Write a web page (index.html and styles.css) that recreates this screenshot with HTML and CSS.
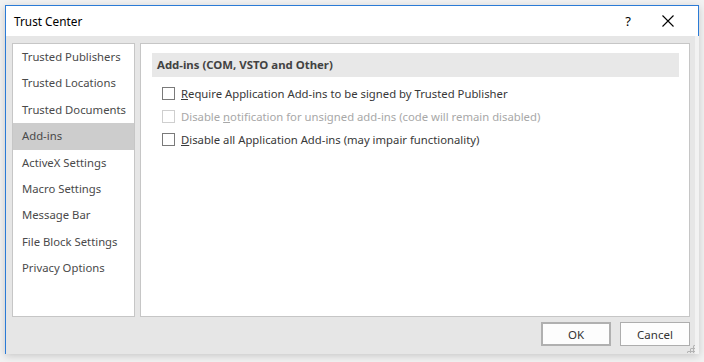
FILE: index.html
```html
<!DOCTYPE html>
<html>
<head>
<meta charset="utf-8">
<link rel="stylesheet" href="styles.css">
</head>
<body>
<div class="backdrop">
  <div class="dialog">
    <div class="titlebar">
      <span class="title">Trust Center</span>
      <span class="help">?</span>
      <span class="close">
        <svg width="12" height="12" viewBox="0 0 12 12"><path d="M0.5 0.5 L11.5 11.5 M11.5 0.5 L0.5 11.5" stroke="#000" stroke-width="1.1" fill="none"/></svg>
      </span>
    </div>
    <div class="body">
      <div class="panels">
        <ul class="nav">
          <li>Trusted Publishers</li>
          <li>Trusted Locations</li>
          <li>Trusted Documents</li>
          <li class="active">Add-ins</li>
          <li>ActiveX Settings</li>
          <li>Macro Settings</li>
          <li>Message Bar</li>
          <li>File Block Settings</li>
          <li>Privacy Options</li>
        </ul>
        <div class="content">
          <div class="section-head">Add-ins (COM, VSTO and Other)</div>
          <div class="options">
            <label class="opt"><span class="box"></span><span><u>R</u>equire Application Add-ins to be signed by Trusted Publisher</span></label>
            <label class="opt disabled"><span class="box"></span><span>Disable <u>n</u>otification for unsigned add-ins (code will remain disabled)</span></label>
            <label class="opt"><span class="box"></span><span><u>D</u>isable all Application Add-ins (may impair functionality)</span></label>
          </div>
        </div>
      </div>
      <div class="buttons">
        <button class="btn default">OK</button>
        <button class="btn">Cancel</button>
      </div>
      <span class="grip"></span>
    </div>
  </div>
</div>
</body>
</html>
```
FILE: styles.css
```css
* { box-sizing: border-box; }
html, body { margin: 0; padding: 0; }
body {
  width: 704px;
  height: 362px;
  overflow: hidden;
  background: #f2f2f2;
  font-family: "Noto Sans", "Open Sans", sans-serif;
  font-size: 11.3px;
}
.backdrop {
  padding: 5px 0 0 5px;
}
.dialog {
  width: 694px;
  box-shadow: 0 2px 8px rgba(0,0,0,0.18);
}
.titlebar {
  height: 31px;
  background: #fff;
  border: 1px solid #2b7bd6;
  border-bottom: none;
  display: flex;
  align-items: center;
  padding-left: 8px;
}
.title {
  color: #000;
  font-size: 11.8px;
  flex: 1;
}
.help {
  width: 20px;
  text-align: center;
  font-size: 13px;
  color: #000;
  margin-right: 24px;
}
.close {
  width: 14px;
  display: flex;
  align-items: center;
  margin-right: 22px;
}
.body {
  width: 690px;
  height: 318px;
  background: #e6e6e6;
  border-left: 1px solid #2b7bd6;
  position: relative;
  padding: 7px 0 0 6px;
}
.panels {
  display: flex;
  gap: 5px;
  height: 274px;
}
.nav {
  list-style: none;
  margin: 0;
  padding: 0;
  width: 123px;
  background: #fff;
  border: 1px solid #c6c6c6;
}
.nav li {
  height: 26.4px;
  line-height: 26.4px;
  padding-left: 9px;
  color: #4a4a4a;
  white-space: nowrap;
}
.nav li.active {
  background: #cdcdcd;
}
.content {
  width: 550px;
  background: #fff;
  border: 1px solid #c6c6c6;
  padding: 9px 10px 0 11px;
}
.section-head {
  height: 24px;
  line-height: 23px;
  background: #e8e8e8;
  font-weight: bold;
  font-size: 11.4px;
  color: #424242;
  padding-left: 5px;
}
.options {
  padding: 5px 0 0 10px;
  display: flex;
  flex-direction: column;
}
.opt {
  display: flex;
  align-items: center;
  height: 23px;
  color: #383838;
}
.opt .box {
  width: 13px;
  height: 13px;
  border: 1px solid #7a7a7a;
  background: #fff;
  margin-right: 6px;
  flex: none;
}
.opt.disabled { color: #a8a8a8; }
.opt.disabled .box { border-color: #cfcfcf; }
.buttons {
  display: flex;
  justify-content: flex-end;
  gap: 9px;
  padding: 5px 5px 0 0;
}
.btn {
  width: 70px;
  height: 24px;
  background: #fdfdfd;
  border: 1px solid #adadad;
  font-family: inherit;
  font-size: 11.5px;
  color: #333;
  padding: 0;
}
.btn.default {
  border: 2px solid #b0b0b0;
}
.grip {
  position: absolute;
  right: 0;
  bottom: 1px;
  width: 9px;
  height: 9px;
  background-image: radial-gradient(circle, #b4b4b4 1px, transparent 1.2px);
  background-size: 3px 3px;
  clip-path: polygon(100% 0, 100% 100%, 0 100%);
}
```
